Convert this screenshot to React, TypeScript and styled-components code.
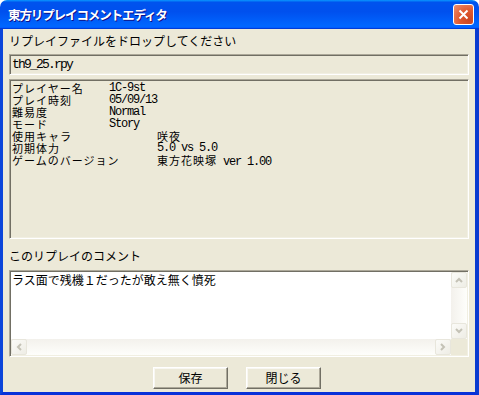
import { FC, ReactNode } from 'react'
import styled, { createGlobalStyle } from 'styled-components'

const GlobalStyle = createGlobalStyle`
  html, body {
    margin: 0;
    padding: 0;
    background: #fff;
  }
  body {
    font-family: "Noto Sans CJK JP", "Noto Sans", sans-serif;
    font-size: 12px;
    color: #000;
  }
`

const Window = styled.div`
  display: flex;
  flex-direction: column;
  width: 479px;
  height: 395px;
`

const TitleBar = styled.div`
  display: flex;
  align-items: center;
  justify-content: space-between;
  height: 29px;
  flex: none;
  padding: 0 5px 0 8px;
  box-sizing: border-box;
  border-radius: 7px 7px 0 0;
  background: linear-gradient(
    180deg,
    #0997ff,
    #0053ee 8%,
    #0050ee 40%,
    #06f 88%,
    #06f 93%,
    #005bff 95%,
    #003dd7 96%,
    #003dd7
  );
`

const TitleText = styled.span`
  color: #fff;
  font-weight: bold;
  font-size: 12.5px;
  letter-spacing: -1.1px;
  line-height: 14px;
  text-shadow: 1px 1px #0f1089;
  padding-top: 1px;
`

const CloseButton = styled.div`
  width: 21px;
  height: 21px;
  box-sizing: border-box;
  border: 1px solid #fff;
  border-radius: 3px;
  display: flex;
  align-items: center;
  justify-content: center;
  background: radial-gradient(circle at 80% 80%, #cc4622 0%, #e0582e 45%, #f09070 100%);
`

const Body = styled.div`
  flex: 1;
  display: flex;
  flex-direction: column;
  padding: 0 6px;
  background: #ece9d8;
  border-left: 3px solid #0b45da;
  border-right: 4px solid #0a3bd0;
  border-bottom: 3px solid #0831d9;
`

const Caption = styled.div<{ $height: number; $top: number }>`
  height: ${(p) => p.$height}px;
  padding-top: ${(p) => p.$top}px;
  box-sizing: border-box;
  line-height: 14px;
  white-space: nowrap;
`

const Sunken = styled.div<{ $height: number; $bg?: string }>`
  height: ${(p) => p.$height}px;
  flex: none;
  box-sizing: border-box;
  border: 1px solid;
  border-color: #aca899 #fff #fff #aca899;
  box-shadow: inset 1px 1px #716f64, inset -1px -1px #f1efe2;
  background: ${(p) => p.$bg || '#ece9d8'};
  padding: 1px;
`

const FileName = styled.div`
  font-family: "Liberation Mono", monospace;
  font-size: 13px;
  letter-spacing: -1.8px;
  line-height: 17px;
  padding-left: 1px;
`

const InfoList = styled.div`
  display: flex;
  flex-direction: column;
  padding: 1px 0 0 1px;
`

const InfoRow = styled.div<{ $wide?: boolean }>`
  display: grid;
  grid-template-columns: ${(p) => (p.$wide ? 145 : 97)}px auto;
  height: 12px;
  white-space: nowrap;
`

const InfoLabel = styled.span`
  display: block;
  height: 12px;
  font-size: 11px;
  line-height: 12px;
  letter-spacing: 1px;
`

const InfoValue = styled.span`
  display: block;
  height: 12px;
  font-family: "Liberation Mono", "Noto Sans CJK JP", monospace;
  font-size: 12px;
  line-height: 12px;
  letter-spacing: -1.2px;
`

const Wide = styled.span`
  font-family: "Noto Sans CJK JP", sans-serif;
  font-size: 11px;
  letter-spacing: 1px;
`

const Gap = styled.div<{ $h: number }>`
  height: ${(p) => p.$h}px;
  flex: none;
`

const Editor = styled.div`
  display: grid;
  grid-template-columns: 1fr 16px;
  grid-template-rows: 1fr 16px;
  height: 100%;
  background: #fff;
`

const EditText = styled.div`
  padding: 1px 0 0 1px;
  line-height: 13px;
  white-space: nowrap;
`

const VTrack = styled.div`
  display: flex;
  flex-direction: column;
  justify-content: space-between;
  background: linear-gradient(90deg, #f3f1ec, #fefefb);
`

const HTrack = styled.div`
  display: flex;
  justify-content: space-between;
  background: linear-gradient(180deg, #f3f1ec, #fefefb);
`

const Corner = styled.div`
  background: #ece9d8;
`

const ScrollButton = styled.div`
  width: 16px;
  height: 16px;
  box-sizing: border-box;
  border: 1px solid #e8e6dc;
  border-radius: 2px;
  display: flex;
  align-items: center;
  justify-content: center;
  background: linear-gradient(135deg, #fbfbf8, #eeede5);
`

const ButtonRow = styled.div`
  flex: 1;
  display: flex;
  justify-content: center;
  gap: 18px;
  padding: 10px 4px 0 0;
`

const PushButton = styled.button`
  width: 75px;
  height: 22px;
  box-sizing: border-box;
  padding: 0;
  font-family: "Noto Sans CJK JP", sans-serif;
  font-size: 12px;
  line-height: 14px;
  color: #000;
  background: #ece9d8;
  border: 1px solid;
  border-color: #fff #716f64 #716f64 #fff;
  box-shadow: inset -1px -1px #aca899, inset 1px 1px #f8f7f2;
`

const Arrow: FC<{ dir: 'up' | 'down' | 'left' | 'right' }> = ({ dir }) => {
  const rot = { up: 0, right: 90, down: 180, left: 270 }[dir]
  return (
    <svg width='8' height='8' viewBox='0 0 8 8' style={{ transform: `rotate(${rot}deg)` }}>
      <path d='M1 6 L4 3 L7 6' fill='none' stroke='#c4c2b6' strokeWidth='2' />
    </svg>
  )
}

const rows: { label: string; value: ReactNode; wide?: boolean }[] = [
  { label: 'プレイヤー名', value: '1C-9st' },
  { label: 'プレイ時刻', value: '05/09/13' },
  { label: '難易度', value: 'Normal' },
  { label: 'モード', value: 'Story' },
  { label: '使用キャラ', value: <Wide>咲夜</Wide>, wide: true },
  { label: '初期体力', value: '5.0 vs 5.0', wide: true },
  {
    label: 'ゲームのバージョン',
    value: (
      <>
        <Wide>東方花映塚</Wide> ver 1.00
      </>
    ),
    wide: true
  }
]

const App: FC = () => (
  <Window>
    <GlobalStyle />
    <TitleBar>
      <TitleText>東方リプレイコメントエディタ</TitleText>
      <CloseButton>
        <svg width='11' height='11' viewBox='0 0 11 11'>
          <path d='M1.5 1.5 L9.5 9.5 M9.5 1.5 L1.5 9.5' stroke='#fff' strokeWidth='2' />
        </svg>
      </CloseButton>
    </TitleBar>
    <Body>
      <Caption $height={25} $top={5}>
        リプレイファイルをドロップしてください
      </Caption>
      <Sunken $height={21}>
        <FileName>th9_25.rpy</FileName>
      </Sunken>
      <Gap $h={4} />
      <Sunken $height={160}>
        <InfoList>
          {rows.map((r) => (
            <InfoRow key={r.label} $wide={r.wide}>
              <InfoLabel>{r.label}</InfoLabel>
              <InfoValue>{r.value}</InfoValue>
            </InfoRow>
          ))}
        </InfoList>
      </Sunken>
      <Caption $height={31} $top={10}>
        このリプレイのコメント
      </Caption>
      <Sunken $height={87} $bg='#fff'>
        <Editor>
          <EditText>ラス面で残機１だったが敢え無く憤死</EditText>
          <VTrack>
            <ScrollButton>
              <Arrow dir='up' />
            </ScrollButton>
            <ScrollButton>
              <Arrow dir='down' />
            </ScrollButton>
          </VTrack>
          <HTrack>
            <ScrollButton>
              <Arrow dir='left' />
            </ScrollButton>
            <ScrollButton>
              <Arrow dir='right' />
            </ScrollButton>
          </HTrack>
          <Corner />
        </Editor>
      </Sunken>
      <ButtonRow>
        <PushButton>保存</PushButton>
        <PushButton>閉じる</PushButton>
      </ButtonRow>
    </Body>
  </Window>
)

export default App
